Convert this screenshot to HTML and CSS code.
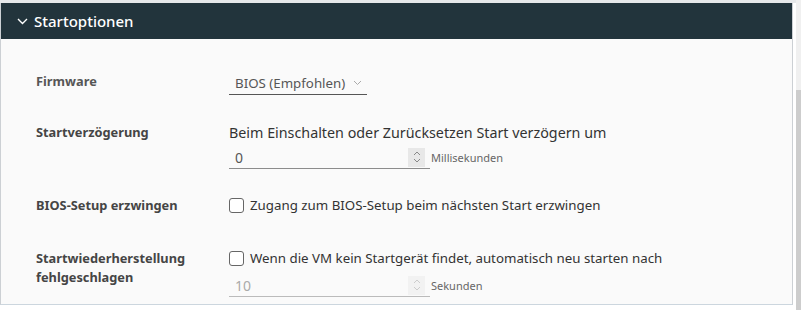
FILE: index.html
```html
<!DOCTYPE html>
<html lang="de">
<head>
  <meta charset="UTF-8" />
  <title>Startoptionen</title>
  <link rel="stylesheet" href="styles.css">
</head>
<body>
  <div class="page">
    <div class="panel">
      <div class="panel-header">
        <svg class="chev" width="11" height="7" viewBox="0 0 11 7"><path d="M1 1 L5.5 5.5 L10 1" fill="none" stroke="#fff" stroke-width="1.4"/></svg>
        <span>Startoptionen</span>
      </div>

      <div class="panel-body">
        <div class="row row-firmware">
          <div class="label">Firmware</div>
          <div class="value">
            <div class="select">
              <span>BIOS (Empfohlen)</span>
              <svg width="9" height="6" viewBox="0 0 9 6"><path d="M1 1 L4.5 4.5 L8 1" fill="none" stroke="#aaa" stroke-width="1"/></svg>
            </div>
          </div>
        </div>

        <div class="row row-delay">
          <div class="label">Startverzögerung</div>
          <div class="value">
            <div class="text">Beim Einschalten oder Zurücksetzen Start verzögern um</div>
            <div class="number-line">
              <div class="number">
                <span>0</span>
                <div class="spin">
                  <svg width="8" height="14" viewBox="0 0 8 14"><path d="M1 5 L4 2 L7 5 M1 9 L4 12 L7 9" fill="none" stroke="#888" stroke-width="1"/></svg>
                </div>
              </div>
              <span class="unit">Millisekunden</span>
            </div>
          </div>
        </div>

        <div class="row row-bios">
          <div class="label">BIOS-Setup erzwingen</div>
          <div class="value">
            <label class="check"><span class="box"></span>Zugang zum BIOS-Setup beim nächsten Start erzwingen</label>
          </div>
        </div>

        <div class="row row-recover">
          <div class="label">Startwiederherstellung<br>fehlgeschlagen</div>
          <div class="value">
            <label class="check"><span class="box"></span>Wenn die VM kein Startgerät findet, automatisch neu starten nach</label>
            <div class="number-line">
              <div class="number disabled">
                <span>10</span>
                <div class="spin">
                  <svg width="8" height="14" viewBox="0 0 8 14"><path d="M1 5 L4 2 L7 5 M1 9 L4 12 L7 9" fill="none" stroke="#ccc" stroke-width="1"/></svg>
                </div>
              </div>
              <span class="unit">Sekunden</span>
            </div>
          </div>
        </div>
      </div>
    </div>
    <div class="scrollbar"><div class="thumb"></div></div>
  </div>
</body>
</html>
```

FILE: styles.css
```css
html,
body {
  margin: 0;
  height: 100%;
}

body {
  font-family: "Noto Sans", sans-serif;
  background-color: #fff;
  color: #333;
}

.page {
  display: flex;
  height: 310px;
  padding-top: 3px;
  box-sizing: border-box;
  background: linear-gradient(#e6e8ea 0 3px, #fff 3px);
}

.panel {
  width: 792px;
  border-left: 1px solid #ccd0d4;
  border-right: 1px solid #ccd0d4;
  height: 301px;
  border-bottom: 1px solid #ccd6de;
}

.panel-header {
  display: flex;
  align-items: center;
  height: 36px;
  background-color: #22343c;
  color: #fff;
  font-size: 15px;
  font-weight: 500;
  padding-left: 16px;
  gap: 6px;
}

.panel-body {
  background-color: #fafafa;
  height: 265px;
  padding-left: 35px;
}

.row {
  display: flex;
}

.label {
  width: 193px;
  font-size: 12.8px;
  font-weight: bold;
  color: #454545;
  line-height: 19px;
}

.row-firmware {
  padding-top: 33px;
  height: 51px;
}

.row-firmware .label {
  color: #565656;
}

.select {
  display: flex;
  align-items: center;
  width: 132px;
  height: 22px;
  padding-left: 6px;
  border-bottom: 1px solid #565656;
  font-size: 13.3px;
  color: #565656;
  gap: 8px;
}

.row-delay {
  height: 73px;
}

.text {
  font-size: 14.3px;
  line-height: 19px;
  color: #333;
}

.number-line {
  display: flex;
  align-items: center;
  margin-top: 4px;
}

.row-recover .number-line {
  margin-top: 6px;
}

.number {
  display: flex;
  align-items: center;
  justify-content: space-between;
  width: 195px;
  height: 22px;
  padding-left: 6px;
  border-bottom: 1px solid #8c8c8c;
  font-size: 14px;
  color: #565656;
}

.spin {
  display: flex;
  align-items: center;
  justify-content: center;
  width: 17px;
  height: 19px;
  margin-right: 5px;
  background-color: #e8e8e8;
}

.unit {
  margin-left: 1px;
  font-size: 11px;
  color: #666;
}

.number.disabled {
  color: #aaa;
  border-bottom-color: #bbb;
}

.number.disabled .spin {
  background-color: #f2f2f2;
}

.row-bios {
  height: 53px;
}

.check {
  display: flex;
  align-items: center;
  gap: 6px;
  font-size: 13.3px;
  line-height: 19px;
  color: #333;
}

.box {
  width: 13px;
  height: 13px;
  border: 1px solid #666;
  border-radius: 3px;
  background-color: #fff;
}

.scrollbar {
  width: 5px;
  margin-left: 3px;
  margin-top: -3px;
  background-color: #f0f0f0;
  padding-top: 90px;
}

.thumb {
  height: 220px;
  background-color: #cdcdcd;
}
```
